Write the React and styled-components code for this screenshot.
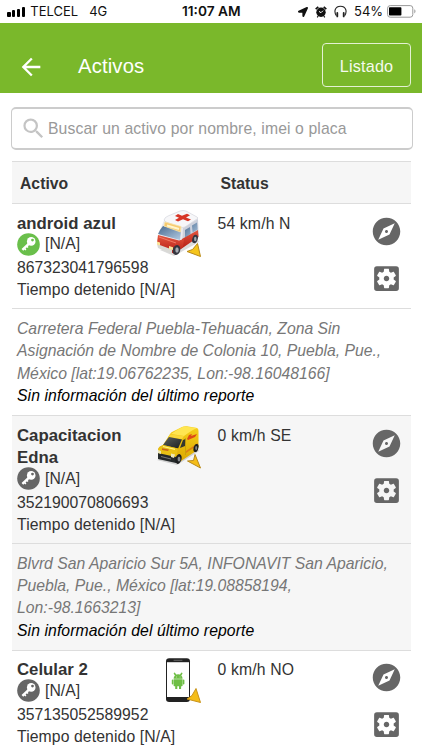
import styled, { createGlobalStyle } from "styled-components";
import { FaLocationArrow } from "react-icons/fa";
import {
  MdArrowBack,
  MdExplore,
  MdSearch,
  MdSettingsApplications,
} from "react-icons/md";

const assets = [
  {
    name: "android azul",
    imei: "867323041796598",
    status: "54 km/h N",
    active: true,
    vehicle: "ambulance",
    address:
      "Carretera Federal Puebla-Tehuacán, Zona Sin Asignación de Nombre de Colonia 10, Puebla, Pue., México [lat:19.06762235, Lon:-98.16048166]",
  },
  {
    name: "Capacitacion Edna",
    imei: "352190070806693",
    status: "0 km/h SE",
    striped: true,
    vehicle: "van",
    address:
      "Blvrd San Aparicio Sur 5A, INFONAVIT San Aparicio, Puebla, Pue., México [lat:19.08858194, Lon:-98.1663213]",
  },
  {
    name: "Celular 2",
    imei: "357135052589952",
    status: "0 km/h NO",
    vehicle: "phone",
  },
];

const AlarmIcon = () => (
  <svg width="12" height="12" viewBox="0 0 12 12">
    <circle cx="6" cy="6.3" r="4.7" fill="#111" />
    <path d="M.7 3.2 3.3.9M11.3 3.2 8.7.9" stroke="#111" strokeWidth="1.7" />
    <path d="m3.2 10-1 1.3M8.8 10l1 1.3" stroke="#111" strokeWidth="1.2" />
    <path d="M4 5.4 6 6.7l2-2" fill="none" stroke="#fff" strokeWidth="1" />
  </svg>
);

const HeadphonesIcon = () => (
  <svg width="13" height="13" viewBox="0 0 13 13" fill="none" stroke="#222">
    <path d="M2.4 10.8C-.6 6.2 1.3 1.2 6.5 1.2s7.1 5 4.1 9.6" strokeWidth="1.1" />
    <path d="M3.3 8v3.4M9.7 8v3.4" strokeWidth="1.8" strokeLinecap="round" />
  </svg>
);

const BatteryIcon = () => (
  <svg width="29" height="13" viewBox="0 0 29 13">
    <rect x=".6" y=".6" width="25.2" height="11.6" rx="2.6" fill="#fff" stroke="#999" />
    <rect x="2" y="2.2" width="12.4" height="8.4" rx=".8" fill="#000" />
    <path d="M27.3 4.3c1.6.7 1.6 3.5 0 4.2z" fill="#999" />
  </svg>
);

const KeyIcon = ({ active }) => (
  <svg width="23" height="23" viewBox="0 0 23 23">
    <circle cx="11.5" cy="11.5" r="11.3" fill={active ? "#6abf4b" : "#666"} />
    <circle cx="14.2" cy="8.4" r="4.3" fill="#fff" />
    <path d="m12 10.6-6.6 6.2" stroke="#fff" strokeWidth="2.5" />
    <path d="m7.3 15.2 1.6 1.7M9.6 13l1.4 1.5" stroke="#fff" strokeWidth="1.5" />
    <circle cx="15.5" cy="7.1" r="1.4" fill={active ? "#6abf4b" : "#666"} />
  </svg>
);

const Ambulance = () => (
  <svg width="50" height="50" viewBox="0 0 50 50">
    <defs>
      <linearGradient id="amb-red" x2="0" y2="1">
        <stop stopColor="#e4563f" />
        <stop offset="1" stopColor="#b41c14" />
      </linearGradient>
      <linearGradient id="amb-glass" x2="1" y2="1">
        <stop stopColor="#47698f" />
        <stop offset="1" stopColor="#b3cbe2" />
      </linearGradient>
    </defs>
    <path d="m6 40 14 6 25-14-3-5z" fill="#999" opacity=".35" />
    <path d="m11 8 16-7h4l13 7 .5 18L25 40 4 33l2-13z" fill="#e9eaf0" />
    <path d="m29 18 15-9 .5 18L28 36z" fill="#cdd1dc" />
    <path d="M10 10q1-3 4-4L26 1q3-1 6 0l11 6q2 1 0 2L31 17q-2 1-5 0L12 12z" fill="#f7f7f9" stroke="#cfd0d8" strokeWidth=".6" />
    <path d="m31 20 5-3 .6 7-5.6 4zM38 15.5l5-3 .6 7-5 3z" fill="url(#amb-glass)" />
    <path d="m28 29 16-9 .5 7L27 39z" fill="url(#amb-red)" />
    <path d="m6 20 3-4 18 5-1 9-22-6z" fill="url(#amb-glass)" />
    <path d="m10 16 1-4 16 4.5-.5 5.5z" fill="#f7c96d" stroke="#f9e3a6" strokeWidth=".8" />
    <path d="M13 15.5 25 19" stroke="#fff6cc" strokeWidth="2" />
    <path d="m4 25 21 5.5 5-1.5-1 8-8 7-16-6.5-2-5z" fill="url(#amb-red)" />
    <path d="m5 27 17 6" stroke="#f27a64" />
    <path d="m3 34 15 5.5V44L4 38z" fill="#d9d9d5" />
    <path d="m3 31.5 3 1v3l-3-1zM15 36l4 1.2v3L15 39z" fill="#fbe49a" />
    <ellipse cx="22.5" cy="40" rx="3.7" ry="5" transform="rotate(18 22.5 40)" fill="#343640" />
    <ellipse cx="23" cy="40" rx="1.7" ry="2.7" fill="#a4aab1" />
    <ellipse cx="41" cy="29" rx="2.7" ry="4.3" transform="rotate(18 41 29)" fill="#343640" />
    <ellipse cx="41.3" cy="29" rx="1.2" ry="2.2" fill="#a4aab1" />
    <path d="m24 4 4 1.8 5-2 3 1.4-4 2.3 5 2-3 1.8-5-2-5 2.3-3-1.5 4-2.3-4-1.8z" fill="#d73526" />
    <path d="M43.5 33.5 46.5 46.5 33 41.5l5.5-2z" fill="#f5c51c" stroke="#b98a1a" />
  </svg>
);

const Van = () => (
  <svg width="50" height="50" viewBox="0 0 50 50">
    <defs>
      <linearGradient id="van-side" x2="0" y2="1">
        <stop stopColor="#f7d01c" />
        <stop offset="1" stopColor="#dba700" />
      </linearGradient>
      <linearGradient id="van-glass" x2="1" y2="1">
        <stop stopColor="#5b605e" />
        <stop offset="1" stopColor="#1b1f20" />
      </linearGradient>
    </defs>
    <path d="m3 38 20 5 22-14-3-5z" fill="#777" opacity=".3" />
    <path d="M4 27q1-3 5-4l7-11q1-2 4-3l8-4q2-1 5-.7L43 6q1.5.5 1.5 3V25l-1 3-18 12-20-5z" fill="url(#van-side)" />
    <path d="M17 12q10-7 13-7.5L43 6q-5 2-13 8z" fill="#ffe651" />
    <path d="m16 12.5 14 1.5-2 3-14-2z" fill="#f9d83a" />
    <path d="m9 23 6-8 13 2.5-4 9z" fill="url(#van-glass)" />
    <path d="m26 26 3-8 2.5-1-.5 7z" fill="#34372e" />
    <path d="M4.5 27 9 23l15 3.5L22 36 4 32z" fill="#e9c114" />
    <path d="m9 24.5 12 2.8" stroke="#fff285" strokeWidth="1.2" />
    <path d="m8 26.2 7 1.3-1 1.5-6-1z" fill="#c8651c" />
    <path d="m4 31 18 4v6L4 37z" fill="#25292a" />
    <path d="M7 34.5 17 37" stroke="#777" />
    <path d="m4 28 3 1v3l-3-1zM17 31.5l4 1-1 3.5-3-1z" fill="#ece6b7" />
    <path d="m33 17 2-4 3-1-1 2 6-2-2 3-7 3z" fill="#dd4a18" />
    <path d="m32 29 12-8v2l-12 8z" fill="#dc7f15" />
    <path d="M31.5 33V16" stroke="#bb930e" strokeWidth=".6" />
    <ellipse cx="24.5" cy="37" rx="3" ry="5" transform="rotate(16 24.5 37)" fill="#1d1f20" />
    <ellipse cx="25" cy="37" rx="1.4" ry="2.6" fill="#85898b" />
    <ellipse cx="42" cy="26" rx="2.3" ry="4.2" transform="rotate(16 42 26)" fill="#1d1f20" />
    <ellipse cx="42.2" cy="26" rx="1" ry="2" fill="#85898b" />
    <path d="m41 32.5 5.5 13.5-13-7 6-.5z" fill="#f5bd18" stroke="#b98a1a" />
  </svg>
);

const Phone = () => (
  <svg width="50" height="50" viewBox="0 -1 50 50">
    <rect x="12" y="1.2" width="24" height="43.8" rx="3.2" fill="#222" />
    <path d="M13 5.2h22V40H13z" fill="#fff" />
    <path d="M20 3.3h8" stroke="#777" strokeWidth=".8" strokeLinecap="round" />
    <g fill="#6ebe45">
      <path d="M19.6 21.8c.1-6.2 8.9-6.2 9 0z" />
      <path d="M19.6 22.3h9v6.2q0 .8-.8.8h-7.4q-.8 0-.8-.8z" />
      <path d="M21.2 28h2.1v4h-2.1zM25 28h2.1v4H25z" />
    </g>
    <path d="m21.5 18-1-1.6m6.2 1.6 1-1.6M18.6 23.2v3.5m11-3.5v3.5" stroke="#6ebe45" strokeWidth="1.6" strokeLinecap="round" />
    <path d="M22 20h.7m3 0h.7" stroke="#fff" strokeWidth=".7" />
    <path d="M42 31.5 46.5 45.5 33 42l5-3.5z" fill="#f5bd18" stroke="#c8921a" />
  </svg>
);

const vehicles = { ambulance: Ambulance, van: Van, phone: Phone };

const AssetRow = ({ asset }) => {
  const Vehicle = vehicles[asset.vehicle];
  return (
    <>
      <Row $striped={asset.striped}>
        <Details>
          <Name>{asset.name}</Name>
          <KeyLine>
            <KeyIcon active={asset.active} />
            <span>[N/A]</span>
          </KeyLine>
          <Imei>{asset.imei}</Imei>
          <Stopped>Tiempo detenido [N/A]</Stopped>
        </Details>
        <VehicleCell>
          <Vehicle />
        </VehicleCell>
        <Speed>{asset.status}</Speed>
        <Actions>
          <ActionButton aria-label="Ubicar">
            <MdExplore size={33} />
          </ActionButton>
          <ActionButton aria-label="Configurar">
            <MdSettingsApplications size={33} />
          </ActionButton>
        </Actions>
      </Row>
      {asset.address && (
        <AddressRow $striped={asset.striped}>
          <Address>{asset.address}</Address>
          <Report>Sin información del último reporte</Report>
        </AddressRow>
      )}
    </>
  );
};

export default function App() {
  return (
    <>
      <GlobalStyle />
      <Screen>
        <StatusBar>
          <Carrier>
            <Signal>
              {[5, 6.5, 8, 10].map((height) => (
                <SignalBar key={height} $height={height} />
              ))}
            </Signal>
            <span>TELCEL</span>
            <Network>4G</Network>
          </Carrier>
          <Clock>11:07 AM</Clock>
          <Indicators>
            <FaLocationArrow size={10} />
            <AlarmIcon />
            <HeadphonesIcon />
            <Percent>54%</Percent>
            <BatteryIcon />
          </Indicators>
        </StatusBar>
        <Header>
          <BackButton aria-label="Volver">
            <MdArrowBack size={28} />
          </BackButton>
          <Title>Activos</Title>
          <ListButton>Listado</ListButton>
        </Header>
        <Content>
          <SearchBox>
            <MdSearch size={27} />
            <SearchInput placeholder="Buscar un activo por nombre, imei o placa" />
          </SearchBox>
          <Table>
            <TableHead>
              <span>Activo</span>
              <span>Status</span>
            </TableHead>
            {assets.map((asset) => (
              <AssetRow key={asset.imei} asset={asset} />
            ))}
          </Table>
        </Content>
      </Screen>
    </>
  );
}

const GlobalStyle = createGlobalStyle`
  * {
    box-sizing: border-box;
  }
  body {
    margin: 0;
    overflow: hidden;
    background: #fff;
  }
  button,
  input {
    font-family: inherit;
  }
`;
const Screen = styled.div`
  width: 422px;
  height: 750px;
  overflow: hidden;
  background: #fff;
  color: #333;
  font-family: "Liberation Sans", Arial, sans-serif;
  font-size: 15.75px;
  line-height: 22px;
`;
const StatusBar = styled.div`
  height: 23px;
  display: grid;
  grid-template-columns: 182px 116px 1fr;
  align-items: center;
  color: #111;
  font-family: Inter, sans-serif;
  font-size: 13px;
  line-height: 23px;
`;
const Carrier = styled.div`
  display: flex;
  align-items: center;
  padding-left: 7px;
`;
const Signal = styled.div`
  display: flex;
  align-items: flex-end;
  gap: 1.3px;
  margin-right: 5px;
`;
const SignalBar = styled.i`
  width: 3.6px;
  height: ${({ $height }) => $height}px;
  border-radius: 1px;
  background: #000;
`;
const Network = styled.span`
  margin-left: 11px;
`;
const Clock = styled.div`
  font-size: 13.7px;
  font-weight: 600;
`;
const Indicators = styled.div`
  display: flex;
  align-items: center;
  gap: 7px;
`;
const Percent = styled.span`
  margin-right: -3px;
`;
const Header = styled.header`
  height: 70px;
  display: flex;
  align-items: center;
  padding: 15px 11px 0 17px;
  background: #7ab82b;
  color: #fff;
`;
const BackButton = styled.button`
  display: flex;
  width: 28px;
  padding: 3px 0 0;
  border: 0;
  background: none;
  color: inherit;
`;
const Title = styled.h1`
  margin: 0 auto 0 33px;
  font-size: 20.25px;
  font-weight: 400;
  letter-spacing: 0.15px;
`;
const ListButton = styled.button`
  width: 89px;
  height: 44px;
  margin-top: -1px;
  padding: 3px 0 0;
  border: 1px solid #e4f1d3;
  border-radius: 4px;
  background: none;
  color: #f5faee;
  font-size: 16.2px;
  letter-spacing: 0.2px;
`;
const Content = styled.main`
  padding: 14px 11px 0;
`;
const SearchBox = styled.label`
  display: flex;
  align-items: center;
  width: 402px;
  height: 43px;
  padding-left: 8px;
  border: 1px solid #ccc;
  border-top-width: 2px;
  border-bottom-width: 2px;
  border-radius: 5px;
  color: #c4c4c4;
`;
const SearchInput = styled.input`
  flex: 1;
  padding: 0 0 0 1px;
  border: 0;
  outline: 0;
  background: none;
  font-size: 15.75px;
  letter-spacing: 0.11px;
  &::placeholder {
    color: #999;
    opacity: 1;
  }
`;
const Table = styled.section`
  width: 400px;
  margin-top: 11px;
  padding-left: 1px;
`;
const TableHead = styled.div`
  height: 42px;
  display: grid;
  grid-template-columns: 200.5px 1fr;
  align-items: center;
  padding: 2px 0 0 8px;
  border-top: 1px solid #ddd;
  background: #f6f6f6;
  font-weight: 700;
`;
const Row = styled.div`
  display: grid;
  grid-template-columns: 137px 63.5px 1fr 36.5px;
  padding: 8.6px 5px 7.4px;
  border-top: 1px solid #ddd;
  background: ${({ $striped }) => ($striped ? "#f6f6f6" : "#fff")};
`;
const Details = styled.div`
  min-width: 0;
`;
const Name = styled.div`
  width: 125px;
  font-size: 16.8px;
  font-weight: 700;
  line-height: 22.4px;
`;
const KeyLine = styled.div`
  display: flex;
  align-items: center;
  gap: 5px;
  height: 22px;
  padding-bottom: 4px;
`;
const Imei = styled.div`
  white-space: nowrap;
`;
const Stopped = styled.div`
  white-space: nowrap;
  letter-spacing: 0.1px;
`;
const VehicleCell = styled.div`
  display: flex;
  align-items: flex-start;
  height: 50px;
  margin-top: -3px;
`;
const Speed = styled.div`
  white-space: nowrap;
  letter-spacing: 0.15px;
`;
const Actions = styled.div`
  display: flex;
  flex-direction: column;
  gap: 14px;
  margin-top: 2px;
`;
const ActionButton = styled.button`
  display: flex;
  padding: 0;
  border: 0;
  background: none;
  color: #666;
`;
const AddressRow = styled.div`
  height: 106.8px;
  padding: 8.6px 5px 8px;
  border-top: 1px solid #ddd;
  background: ${({ $striped }) => ($striped ? "#f6f6f6" : "#fff")};
  font-style: italic;
  line-height: 22.4px;
`;
const Address = styled.div`
  color: #777;
`;
const Report = styled.div`
  color: #000;
  letter-spacing: 0.08px;
`;
